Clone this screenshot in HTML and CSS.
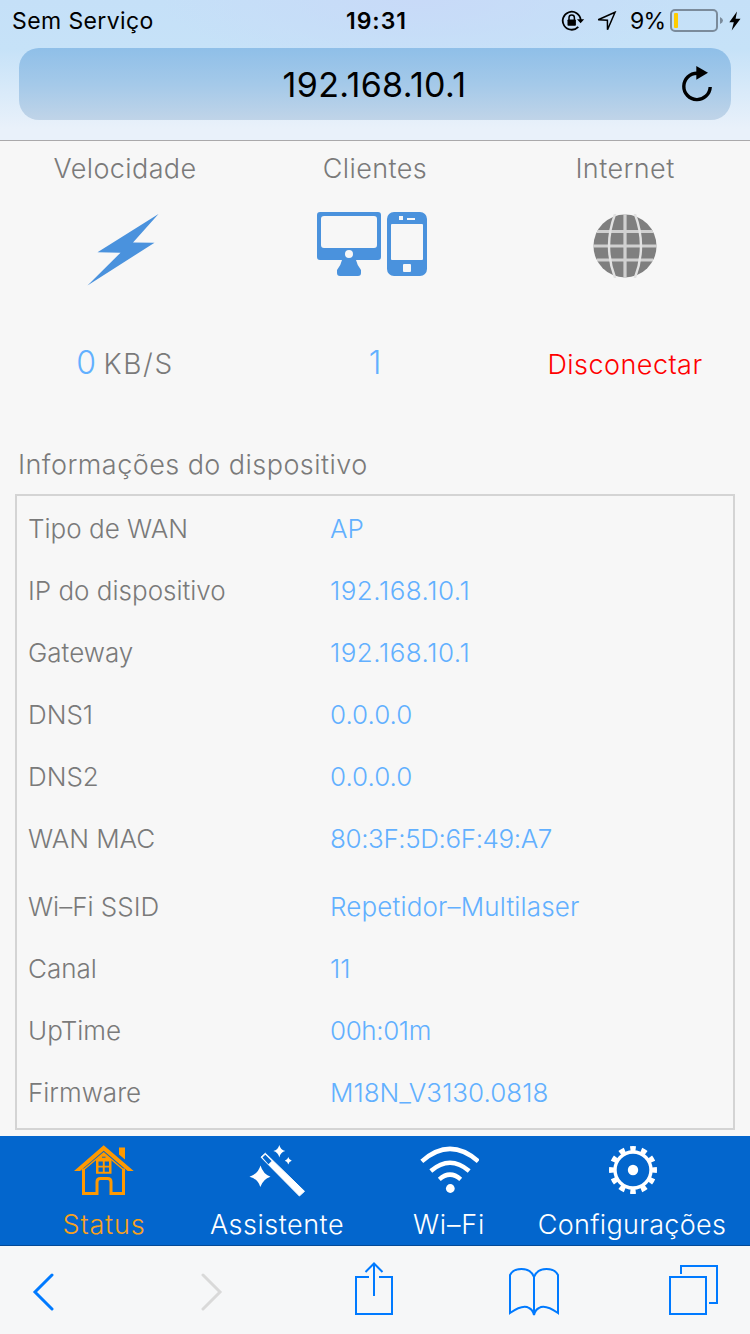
FILE: index.html
```html
<!DOCTYPE html>
<html lang="pt-BR">

<head>
    <meta charset="UTF-8">
    <meta name="viewport" content="width=device-width, initial-scale=1.0">
    <title>192.168.10.1</title>
    <link rel="stylesheet" href="styles.css">
</head>

<body>
    <!-- browser header -->
    <header class="browser">
        <div class="status">
            <span class="carrier">Sem Serviço</span>
            <span class="time">19:31</span>
            <div class="status-r">
                <svg class="lock" width="24" height="22" viewBox="0 0 24 22">
                    <path d="M17.3 16.9A9 9 0 1 1 19.7 10" fill="none" stroke="#000" stroke-width="1.8"/>
                    <path d="M16 9.3h7.2l-3.6 4z"/>
                    <path d="M8 10V7.8a2.7 2.7 0 0 1 5.400 0V10" fill="none" stroke="#000" stroke-width="1.5"/>
                    <rect x="6.500" y="9.500" width="8.400" height="6.200" rx=".8"/>
                </svg>
                <svg class="arrow" width="20" height="20" viewBox="0 0 20 20">
                    <path d="M18 1.300L1.200 8.700l9.200.5.1 9.500z" fill="none" stroke="#000" stroke-width="1.500"/>
                </svg>
                <span class="percent">9%</span>
                <svg class="battery" width="54" height="24" viewBox="0 0 54 24">
                    <rect x="1" y="1" width="46" height="21" rx="4" fill="none" stroke="#7b8b9b" stroke-width="2"/>
                    <rect x="4" y="4" width="4" height="15" rx="1" fill="#fc0"/>
                    <path d="M50 8q3 1.500 3 3.500t-3 3.500z" fill="#7b8b9b"/>
                </svg>
                <svg width="12" height="20" viewBox="0 0 12 20">
                    <path d="M8 .5L.3 11.200h4.500L2.700 19.500l8.800-11.700H6.600z"/>
                </svg>
            </div>
        </div>
        <div class="address">
            <span>192.168.10.1</span>
            <svg class="reload" width="32" height="36" viewBox="0 0 32 36">
                <path d="M16 7.200A13.200 13.200 0 1 0 29.200 21" fill="none" stroke="#000" stroke-width="3.400"/>
                <path d="M15.300 0l11.700 6.700-11.700 7z"/>
            </svg>
        </div>
    </header>

    <main>
        <!-- summary -->
        <ul class="summary">
            <li>
                <h2>Velocidade</h2>
                <div class="pic">
                    <svg class="bolt" width="72" height="72" viewBox="0 0 72 72">
                        <path d="M71.500 0L46 28.500l21.500.2L.5 71.500l33-32.800-23-.4z" fill="#4a92dd"/>
                    </svg>
                </div>
                <p><b>0</b> <span class="unit">KB/S</span></p>
            </li>
            <li>
                <h2>Clientes</h2>
                <div class="pic">
                    <svg class="clients" width="110" height="64" viewBox="0 0 110 64">
                        <path fill="#4a92dd" fill-rule="evenodd" d="M3 0h58a3 3 0 0 1 3 3v42a3 3 0 0 1-3 3H39q1 5 5 10v3a3 3 0 0 1-3 3H23a3 3 0 0 1-3-3v-3q4-5 5-10H3a3 3 0 0 1-3-3V3a3 3 0 0 1 3-3zM7 4a3 3 0 0 0-3 3v26a3 3 0 0 0 3 3h50a3 3 0 0 0 3-3V7a3 3 0 0 0-3-3zM32 38a4 4 0 1 0 0 8 4 4 0 0 0 0-8z"/>
                        <path fill="#4a92dd" fill-rule="evenodd" d="M77 0h26a7 7 0 0 1 7 7v50a7 7 0 0 1-7 7H77a7 7 0 0 1-7-7V7a7 7 0 0 1 7-7zM75 12a1 1 0 0 0-1 1v34a1 1 0 0 0 1 1h30a1 1 0 0 0 1-1V13a1 1 0 0 0-1-1zM82 4v4h4V4zM90 6v2h8V6zM87 52a1 1 0 0 0-1 1v6a1 1 0 0 0 1 1h6a1 1 0 0 0 1-1v-6a1 1 0 0 0-1-1z"/>
                    </svg>
                </div>
                <p><b>1</b></p>
            </li>
            <li>
                <h2>Internet</h2>
                <div class="pic">
                    <svg width="64" height="64" viewBox="0 0 64 64">
                        <circle cx="32" cy="32" r="31.500" fill="#7f7f7f"/>
                        <path d="M32 0v64M4 17.500h56M0 32h64M4 46h56" stroke="#d0d0d0" stroke-width="3.200"/>
                        <path d="M22.500-1Q9.500 32 22.500 65M41.500-1Q54.500 32 41.500 65" fill="none" stroke="#e2e2e2" stroke-width="2.400"/>
                    </svg>
                </div>
                <p class="off">Disconectar</p>
            </li>
        </ul>

        <!-- device information -->
        <h3>Informações do dispositivo</h3>
        <div class="info">
            <dl>
                <dt>Tipo de WAN</dt><dd>AP</dd>
                <dt>IP do dispositivo</dt><dd class="ip">192.168.10.1</dd>
                <dt>Gateway</dt><dd class="ip">192.168.10.1</dd>
                <dt>DNS1</dt><dd>0.0.0.0</dd>
                <dt>DNS2</dt><dd>0.0.0.0</dd>
                <dt>WAN MAC</dt><dd class="mac">80:3F:5D:6F:49:A7</dd>
            </dl>
            <dl>
                <dt>Wi–Fi SSID</dt><dd class="ssid">Repetidor–Multilaser</dd>
                <dt>Canal</dt><dd>11</dd>
                <dt>UpTime</dt><dd class="mac">00h:01m</dd>
                <dt>Firmware</dt><dd>M18N_V3130.0818</dd>
            </dl>
        </div>
    </main>

    <!-- page menu -->
    <nav class="menu">
        <a href="#" class="current">
            <svg width="60" height="52" viewBox="0 0 60 52">
                <path d="M45 2.500h6v12l-6-5z" fill="#f90"/>
                <path d="M0 26L29.700.3 59.700 26h-6L29.700 5.800 6 26z" fill="#f90"/>
                <path d="M9.500 23.500v25H23V37q0-3.500 3.500-3.500h7Q37 33.500 37 37v11.500h12.500v-25" fill="none" stroke="#f90" stroke-width="3"/>
                <path d="M8 26L29.700 8 51 26" fill="none" stroke="#f90" stroke-width="1.500"/>
                <path d="M22 14.500L29.700 8l7.800 6.500v14.200H22z" fill="#f90"/>
                <path d="M24.500 16.500h4.300v4.300h-4.300zM30.700 16.500H35v4.300h-4.300zM24.500 22.500h4.300v4.300h-4.300zM30.700 22.500H35v4.300h-4.300z" fill="#0366cd"/>
                <path d="M28 12.200h3.500" stroke="#0366cd"/>
            </svg>
            <span>Status</span>
        </a>
        <a href="#">
            <svg width="56" height="52" viewBox="0 1 56 52">
                <path d="M11.500 21.500Q14 30 21.500 32.700 14 35 11.300 43 9 35 .5 32.700 9 30 11.500 21.500zM30.300 1q1.200 4.800 6 6-4.800 1.200-6 6.500-1.200-5.300-6-6.500 4.800-1.200 6-6zM39.300 13q.7 3 3.500 3.700-2.800.7-3.500 3.800-.7-3.100-3.500-3.800 2.800-.7 3.500-3.700z" fill="#fff"/>
                <path d="M12 13.200l4.300-4L55.500 47.300 50.400 52z" fill="#fff" stroke="#fff" stroke-linejoin="round"/>
                <path d="M13.500 13.400l2.800-2.600 6.300 6.200-3.200 3.200z" fill="#0366cd"/>
            </svg>
            <span class="t1">Assistente</span>
        </a>
        <a href="#">
            <svg width="60" height="52" viewBox="-1 -1 60 52">
                <path d="M1.800 15.300Q30-9.500 58.200 15.300M10.800 25Q30 8.500 49.200 25M19.300 33.300Q30 24 40.700 33.300" fill="none" stroke="#fff" stroke-width="4.400"/>
                <circle cx="30.300" cy="42.500" r="4.400" fill="#fff"/>
            </svg>
            <span>Wi–Fi</span>
        </a>
        <a href="#">
            <svg class="gear" width="48" height="52" viewBox="0 0 48 52">
                <circle cx="24" cy="25" r="18" fill="none" stroke="#fff" stroke-width="3.400"/>
                <circle cx="24" cy="25" r="21.500" fill="none" stroke="#fff" stroke-width="5" pathLength="120" stroke-dasharray="5 5" stroke-dashoffset="2.500"/>
                <circle cx="24" cy="25" r="5.200" fill="#fff"/>
            </svg>
            <span class="t2">Configurações</span>
        </a>
    </nav>

    <!-- browser toolbar -->
    <footer class="toolbar">
        <svg class="chevron" width="22" height="50" viewBox="0 0 22 50"><path d="M20 9L3 26l17 17"/></svg>
        <svg class="chevron disabled" width="22" height="50" viewBox="0 0 22 50"><path d="M2 9l17 17L2 43"/></svg>
        <svg width="38" height="54" viewBox="0 0 38 54"><path d="M14 15H1v37h36V15H24M19 34V2M10.500 10L19 1.500l8.500 8.500"/></svg>
        <svg width="50" height="54" viewBox="0 0 50 54"><path d="M25 53V15Q22 7 12.500 7 4 7 1 13v38Q14 42 20 46q4 2 5 7 1-5 5-7 6-4 19 5V13q-3-6-11.500-6Q28 7 25 15"/></svg>
        <svg width="50" height="54" viewBox="0 0 50 54"><path d="M1 15h36v37H1zM12 12V4h36v37h-8"/></svg>
    </footer>
</body>

</html>
```
FILE: styles.css
```css
* {
    margin: 0;
    padding: 0;
    box-sizing: border-box;
}

body {
    width: 750px;
    height: 1334px;
    overflow: hidden;
    background: #f7f7f7;
    font-family: Inter, "Liberation Sans", sans-serif;
    font-weight: 330;
    color: #7a7a7a;
}

li {
    list-style: none;
}

a {
    text-decoration: none;
}

svg {
    display: block;
    flex: none;
}

/* browser header */
.browser {
    height: 141px;
    padding: 0 19px;
    border-bottom: 1px solid #aaa9ab;
    background: radial-gradient(ellipse 260px 70px at 56% 0, #c8daf8, rgb(200, 218, 248, 0)),
        linear-gradient(#c5e0f8, #c6e2f8 35%, #e9f1fa 92%);
    color: #000;
    font-weight: 400;
}

.status {
    display: grid;
    grid-template-columns: 1fr auto 1fr;
    align-items: center;
    height: 48px;
    margin: 0 -10px 0 -7px;
    padding-bottom: 7px;
    font-size: 23px;
}

.carrier {
    letter-spacing: .4px;
}

.time {
    letter-spacing: 1px;
    font-weight: 600;
}

.status-r {
    display: flex;
    align-items: center;
    justify-content: flex-end;
}

.arrow {
    margin: 0 13px 0 12px;
}

.percent {
    width: 34px;
    letter-spacing: -.7px;
}

.battery {
    margin: 0 5px 0 6px;
}

.address {
    display: grid;
    grid-template-columns: 1fr auto 1fr;
    align-items: center;
    height: 72px;
    padding-right: 18px;
    border-radius: 20px;
    background: linear-gradient(#8fbfe8, #a4c9e9 50%, #c0d4e8);
    font-size: 34px;
}

.address span {
    grid-column: 2;
    margin-left: 17px;
    letter-spacing: .35px;
}

.reload {
    justify-self: end;
}

/* summary */
.summary {
    display: grid;
    grid-template-columns: repeat(3, 1fr);
    height: 303px;
    text-align: center;
}

.summary h2 {
    height: 56px;
    line-height: 56px;
    font-size: 27px;
    font-weight: 330;
    letter-spacing: .4px;
}

.pic {
    display: flex;
    justify-content: center;
    height: 138px;
    padding-top: 17px;
}

.bolt {
    margin-right: 5px;
}

.clients {
    margin-top: -2px;
    margin-right: 6px;
}

.summary p {
    height: 56px;
    line-height: 56px;
    font-size: 27px;
}

.summary b {
    font-size: 32px;
    font-weight: 330;
    color: #62b0ff;
}

.summary .unit {
    font-size: 28px;
    letter-spacing: 1.6px;
}

.summary .off {
    padding-top: 2px;
    color: #f00;
    letter-spacing: .45px;
}

/* device information */
h3 {
    height: 50px;
    padding-left: 18px;
    line-height: 42px;
    font-size: 27px;
    font-weight: 330;
    letter-spacing: .45px;
}

.info {
    display: grid;
    gap: 6px;
    width: 720px;
    height: 636px;
    margin: 0 0 6px 15px;
    padding: 1px 0 5px 11px;
    border: 2px solid #d4d4d4;
    font-size: 26px;
}

.info dl {
    display: grid;
    grid-template-columns: 302px 1fr;
    grid-auto-rows: 62px;
    align-items: center;
}

.info dd {
    color: #62b0ff;
}

.info .ip {
    letter-spacing: .5px;
}

.info .mac {
    letter-spacing: -.4px;
}

.info .ssid {
    letter-spacing: .15px;
}

/* page menu */
.menu {
    display: grid;
    grid-template-columns: 172px 174px 170px 196px;
    height: 110px;
    padding: 9px 20px 0 18px;
    border-bottom: 1px solid #034a97;
    background: #0366cd;
}

.menu a {
    display: flex;
    flex-direction: column;
    align-items: center;
    color: #fff;
    font-size: 27px;
    letter-spacing: .8px;
}

.menu span {
    line-height: 56px;
    white-space: nowrap;
}

.menu .t1 {
    letter-spacing: .5px;
}

.menu .t2 {
    letter-spacing: .3px;
}

.menu .gear {
    margin-left: 2px;
}

.menu .current {
    color: #f9a11b;
}

/* browser toolbar */
.toolbar {
    display: grid;
    grid-template-columns: 86px 252px 72px 248px 72px;
    justify-items: center;
    height: 88px;
    padding-top: 16px;
    background: #f6f7f8;
}

.toolbar path {
    fill: none;
    stroke: #007aff;
    stroke-width: 2;
}

.toolbar .chevron {
    margin-top: 4px;
}

.toolbar .chevron path {
    stroke-width: 3;
    stroke-linecap: round;
}

.toolbar .disabled path {
    stroke: #d9d9d9;
}
```
